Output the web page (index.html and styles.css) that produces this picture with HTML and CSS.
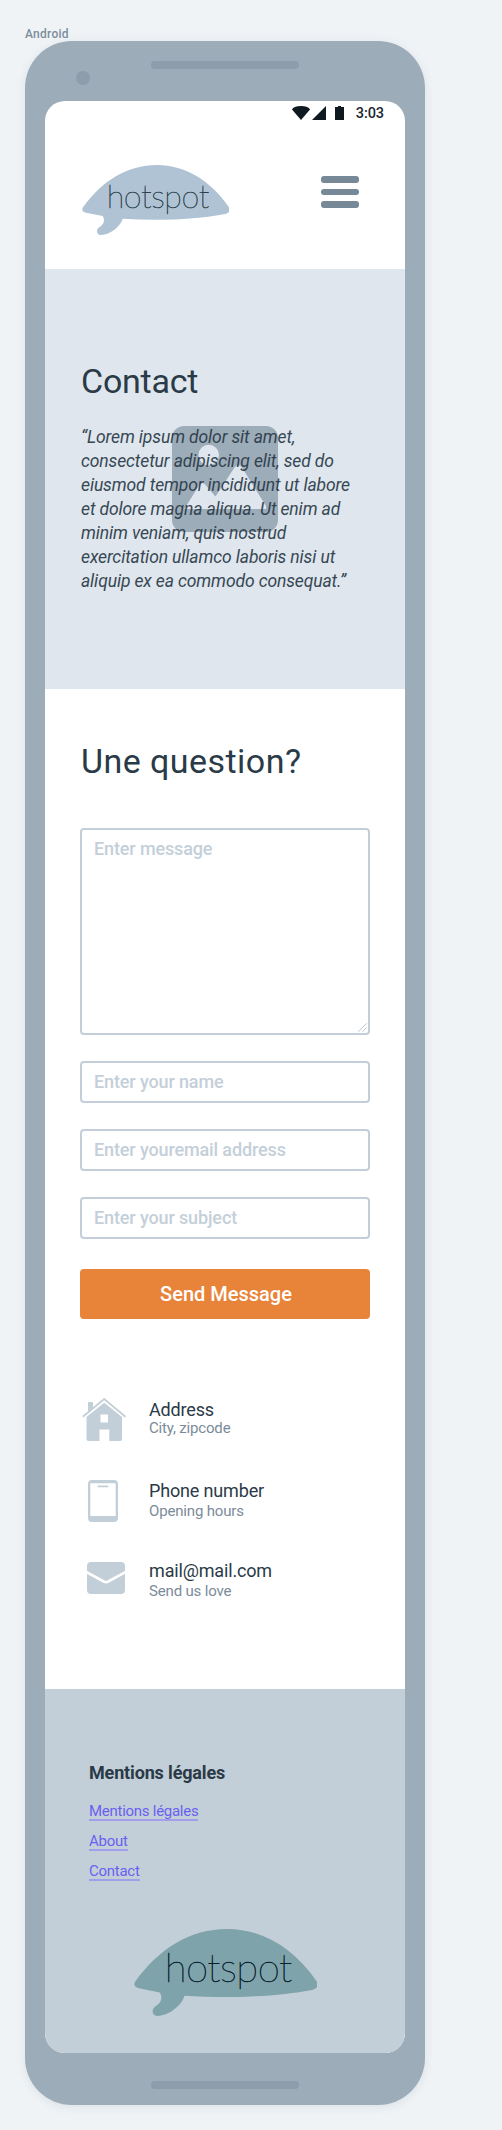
FILE: index.html
```html
<!DOCTYPE html>
<html lang="fr">
<head>
<meta charset="utf-8">
<title>Contact</title>
<link rel="stylesheet" href="styles.css">
</head>
<body>
<svg class="defs" aria-hidden="true">
  <symbol id="bubble" viewBox="0 0 443 210">
    <path d="M3 127C60 48 135 0 225 0C312 0 386 48 440 125Q444 132 443 138Q442 143 430 147C350 162 235 169 122 161C115 185 85 208 57 210C48 210 45 203 45 198C45 192 49 188 54 185C67 177 69 164 62 153L12 143C2 141-2 135 3 127Z"/>
  </symbol>
</svg>
<p class="device-name">Android</p>
<main class="phone">
  <div class="phone-top"><span class="camera"></span><span class="speaker"></span></div>
  <div class="screen">
    <header class="header">
      <div class="status">
        <svg width="52" height="14" viewBox="0 0 52 14" fill="#0f1a20">
          <path d="M0 3.5Q1.5 0 9 0T18 3.5L9 14Z"/>
          <path d="M34 0V14H20Z"/>
          <path d="M43 1H46V0H49V1H52V14H43Z"/>
        </svg>
        <span>3:03</span>
      </div>
      <div class="brand">
        <svg class="logo" viewBox="0 0 443 210">
          <use href="#bubble" width="443" height="210"/>
          <text x="74" y="129" textLength="308">hotspot</text>
        </svg>
        <div class="menu"><i></i><i></i><i></i></div>
      </div>
    </header>
    <section class="hero">
      <svg class="hero-image" viewBox="0 0 106 106">
        <rect width="106" height="106" rx="12" fill="#9dacb9"/>
        <circle cx="36.7" cy="29" r="10.3" fill="#dfe6ee"/>
        <path d="M12.3 83L27 59.5Q30.500 54.500 34 59.500L43.500 70.500L62.500 41.500Q66.300 37 70 41.500L94 80V83Z" fill="#dfe6ee"/>
      </svg>
      <h1>Contact</h1>
      <p class="quote">“Lorem ipsum dolor sit amet,<br>consectetur adipiscing elit, sed do<br>eiusmod tempor incididunt ut labore<br>et dolore magna aliqua. Ut enim ad<br>minim veniam, quis nostrud<br>exercitation ullamco laboris nisi ut<br>aliquip ex ea commodo consequat.”</p>
    </section>
    <section class="question">
      <h2>Une question?</h2>
      <form class="form">
        <div class="message">
          <textarea placeholder="Enter message"></textarea>
          <svg class="grip" width="9" height="9" viewBox="0 0 9 9" stroke="#b4c1cd" stroke-width=".9"><path d="M.3 8.700L8.700.3M4.500 8.700L8.700 4.500"/></svg>
        </div>
        <input type="text" placeholder="Enter your name">
        <input type="text" placeholder="Enter youremail address">
        <input type="text" placeholder="Enter your subject">
        <button type="button">Send Message</button>
      </form>
      <ul class="details">
        <li>
          <svg width="44" height="44" viewBox="0 0 44 44">
            <path d="M6 14V4.500Q6 4 6.500 4H10.500Q11 4 11 4.500V10Z"/>
            <path d="M.8 18.800L22.200 1L43.500 18.800" fill="none" stroke="#c3cfd8" stroke-width="1.800"/>
            <path fill-rule="evenodd" d="M4.500 19L22.200 4.800L40 19V41Q40 43 38 43H27.300V31.500H17.500V43H6.500Q4.500 43 4.500 41ZM18.500 16.500V24.500H26V16.500Z"/>
          </svg>
          <div><strong>Address</strong><span>City, zipcode</span></div>
        </li>
        <li>
          <svg width="44" height="44" viewBox="0 0 44 44">
            <path fill-rule="evenodd" d="M10 2H32Q36 2 36 6V40Q36 44 32 44H10Q6 44 6 40V6Q6 2 10 2ZM8.300 5.200V38H33.700V5.200Z"/>
            <rect x="15.500" y="7.500" width="11" height="1.800" rx=".9"/>
          </svg>
          <div><strong>Phone number</strong><span>Opening hours</span></div>
        </li>
        <li>
          <svg width="44" height="44" viewBox="0 0 44 44">
            <rect x="5" y="4" width="38" height="32" rx="4"/>
            <path d="M4 13.800L21.800 23.500Q24 24.800 26.200 23.500L44 13.800" fill="none" stroke="#fff" stroke-width="2.600"/>
          </svg>
          <div><strong>mail@mail.com</strong><span>Send us love</span></div>
        </li>
      </ul>
    </section>
    <footer class="footer">
      <h3>Mentions légales</h3>
      <nav><a>Mentions légales</a><a>About</a><a>Contact</a></nav>
      <svg class="logo logo-dark" viewBox="0 0 443 210">
        <use href="#bubble" width="443" height="210"/>
        <text x="74" y="129" textLength="308">hotspot</text>
      </svg>
    </footer>
  </div>
  <span class="home-bar"></span>
</main>
</body>
</html>
```
FILE: styles.css
```css
* { box-sizing: border-box; }
body {
  margin: 0;
  height: 2130px;
  padding: 24px 0 0 25px;
  background: #eff3f6;
  font-family: Roboto, "Liberation Sans", sans-serif;
  color: #2a3a47;
}
h1, h2, h3, p, ul { margin: 0; padding: 0; }
.defs { position: absolute; width: 0; height: 0; }

.device-name {
  height: 17px;
  line-height: 20px;
  font-size: 12px;
  font-weight: 500;
  letter-spacing: .25px;
  color: #7d8d9b;
}
.phone {
  width: 400px;
  height: 2064px;
  padding: 0 20px;
  border-radius: 47px;
  background: #9dacb9;
  box-shadow: 0 2px 10px rgba(60, 80, 100, .1);
}
.phone-top {
  display: flex;
  align-items: flex-start;
  height: 60px;
}
.camera {
  width: 14px;
  height: 14px;
  margin: 30px 61px 0 31px;
  border-radius: 50%;
  background: #8e9dac;
}
.speaker, .home-bar {
  width: 148px;
  height: 8px;
  border-radius: 4px;
  background: #8e9dac;
}
.speaker { margin-top: 20px; }
.home-bar { display: block; margin: 28px 0 0 106px; }
.screen {
  height: 1952px;
  border-radius: 20px;
  overflow: hidden;
  background: #fff;
}

.header { height: 168px; }
.status {
  display: flex;
  justify-content: flex-end;
  align-items: center;
  gap: 12px;
  height: 24px;
  padding-right: 21px;
  font-size: 14.5px;
  font-weight: 500;
  letter-spacing: -.1px;
  color: #1c2730;
}
.brand {
  display: flex;
  justify-content: space-between;
  padding: 40px 46px 0 36.500px;
}
.logo {
  display: block;
  width: 147.700px;
  height: 70px;
  fill: #b0c3d4;
}
.logo text {
  fill: #2a3f4c;
  stroke: #2a3f4c;
  stroke-width: 1.500px;
  font: 100 97px Lato, sans-serif;
}
.menu {
  display: flex;
  flex-direction: column;
  gap: 6px;
  padding-top: 11px;
}
.menu i {
  width: 38px;
  height: 6.600px;
  border-radius: 3px;
  background: #778896;
}

.hero {
  position: relative;
  height: 420px;
  padding: 92px 36px 0;
  background: #dfe6ee;
}
.hero-image {
  position: absolute;
  left: 127px;
  top: 157px;
  width: 106px;
  height: 106px;
}
h1, h2 {
  position: relative;
  line-height: 40px;
  font-size: 34px;
  font-weight: 400;
}
h1 { letter-spacing: -.25px; }
h2 { letter-spacing: .45px; }
.quote {
  position: relative;
  margin-top: 24px;
  line-height: 24px;
  font-size: 17.500px;
  font-style: italic;
  letter-spacing: -.12px;
  white-space: nowrap;
  opacity: .92;
}

.question {
  height: 1000px;
  padding: 52px 35px 0;
}
.question h2 { margin-left: 1px; }
.form {
  display: flex;
  flex-direction: column;
  gap: 26px;
  margin-top: 47px;
}
.message {
  position: relative;
  height: 207px;
}
.grip { position: absolute; right: 3px; bottom: 3px; fill: none; }
textarea, input {
  display: block;
  width: 100%;
  margin: 0;
  border: 2px solid #c4ced9;
  border-radius: 4px;
  background: #fff;
  font: 500 18px/24px Roboto, sans-serif;
  letter-spacing: -.13px;
}
textarea {
  height: 100%;
  padding: 6.500px 12px;
  resize: none;
  overflow: hidden;
}
input {
  height: 42px;
  padding: 0 12px 1px;
}
::placeholder { color: #c4cfd9; opacity: 1; }
button {
  height: 50px;
  margin-top: 4px;
  padding: 0 0 0 2px;
  border: 0;
  border-radius: 4px;
  background: #e8833a;
  color: #fff;
  font: 500 20px/50px Roboto, sans-serif;
}
.details {
  display: grid;
  row-gap: 36px;
  margin-top: 79px;
  list-style: none;
}
.details li {
  display: flex;
  gap: 23px;
  height: 44px;
  padding-left: 2px;
}
.details svg { fill: #c3cfd8; }
.details strong, .details span { display: block; white-space: nowrap; }
.details strong {
  padding-top: 3px;
  line-height: 20px;
  font-size: 18px;
  font-weight: 400;
  letter-spacing: -.16px;
}
.details span {
  margin-top: 1px;
  line-height: 18px;
  font-size: 15px;
  letter-spacing: -.17px;
  color: #7b8b9a;
}
.details li:first-child strong { padding-top: 2px; }
.details li:first-child span { margin-top: -1px; }

.footer {
  height: 364px;
  padding: 71.500px 44px 0;
  background: #c3cfd8;
}
.footer h3 {
  line-height: 24px;
  font-size: 18px;
  font-weight: 700;
  letter-spacing: -.15px;
}
.footer nav {
  display: flex;
  flex-direction: column;
  align-items: flex-start;
  gap: 12px;
  margin-top: 18.500px;
}
.footer a {
  height: 18px;
  border-bottom: 2px solid #a19fec;
  line-height: 17px;
  font-size: 15px;
  letter-spacing: -.27px;
  color: #6a5ff0;
}
.logo-dark {
  width: 183.500px;
  height: 87px;
  margin: 48px 0 0 44.500px;
  fill: #7fa3ab;
}
.logo-dark text { fill: #08202b; stroke: #08202b; stroke-width: 1.200px; }
```
